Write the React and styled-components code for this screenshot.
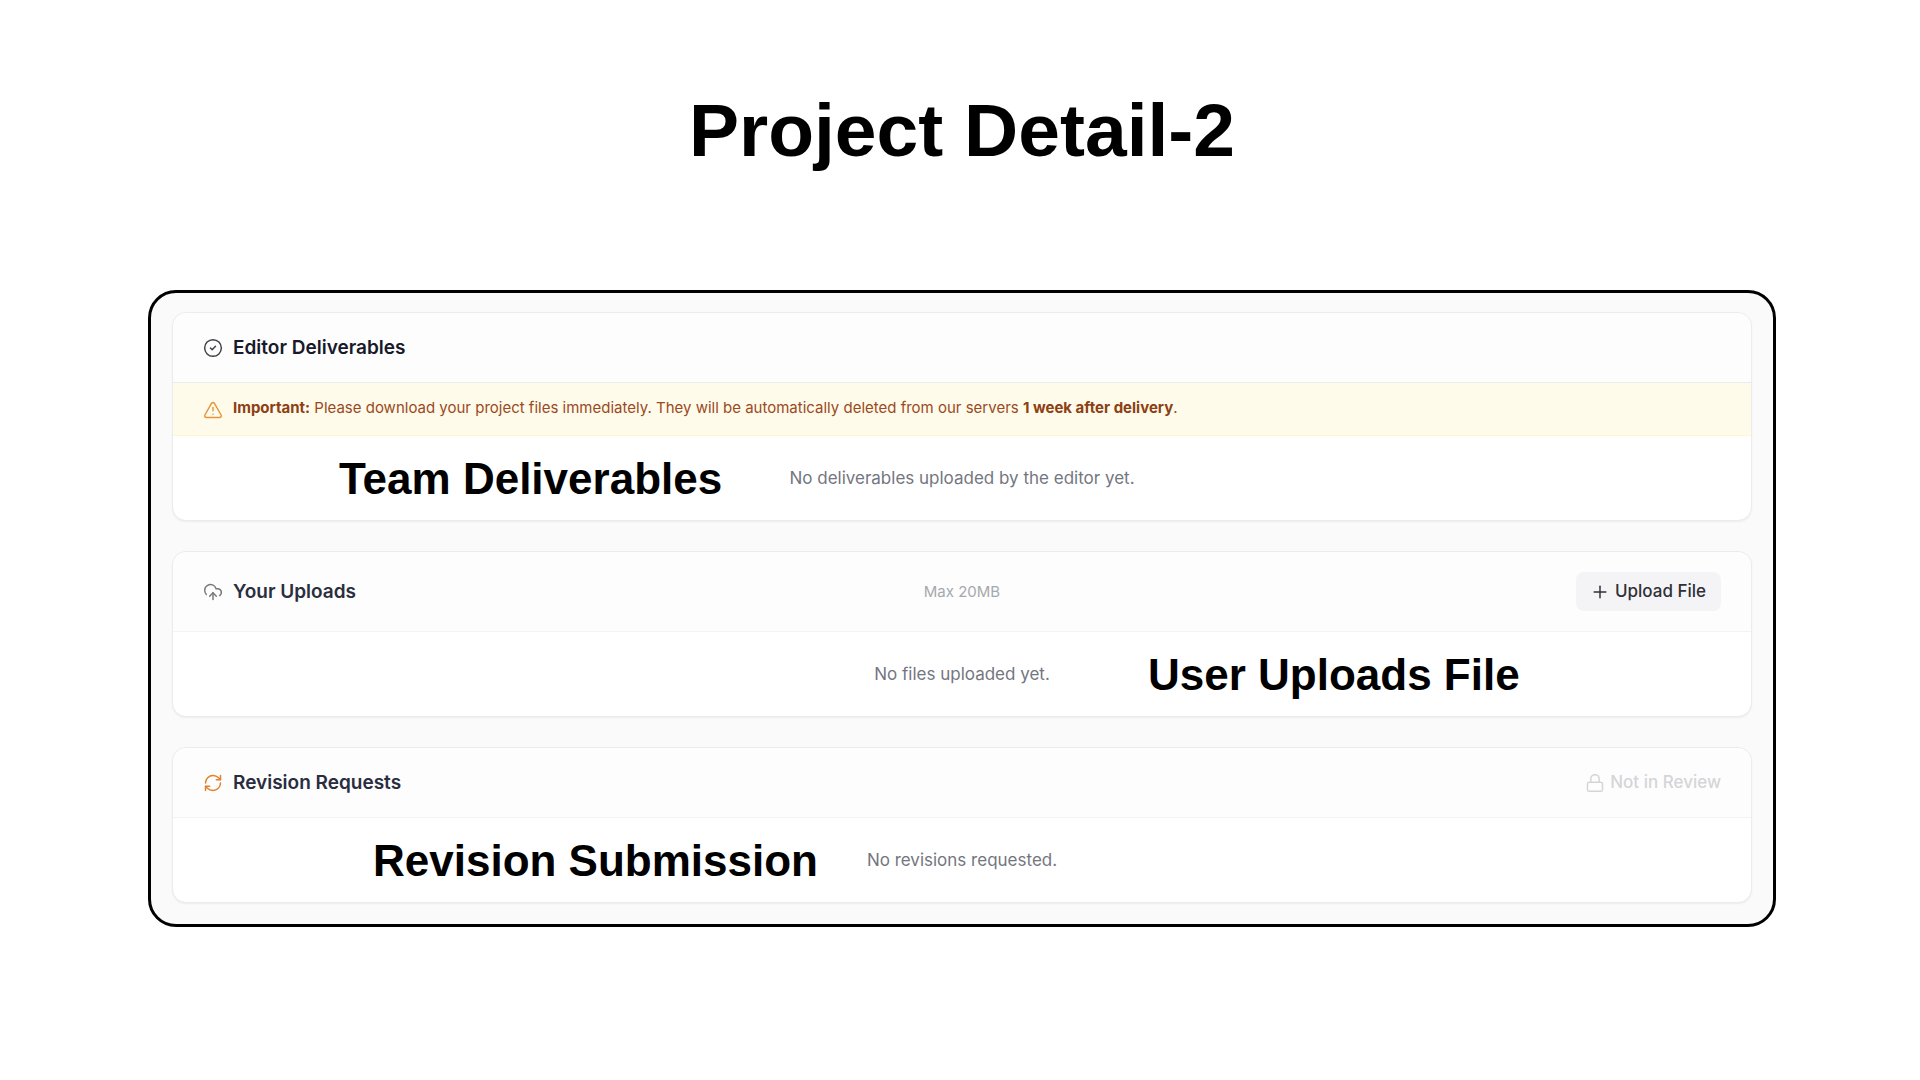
import React from 'react'
import styled, { createGlobalStyle } from 'styled-components'
import { CircleCheck, CloudUpload, Lock, Plus, RefreshCw, TriangleAlert } from 'lucide-react'

const GlobalStyle = createGlobalStyle`
  * {
    box-sizing: border-box;
  }

  body {
    margin: 0;
    background: #fff;
    font-family: Inter, "Liberation Sans", sans-serif;
    -webkit-font-smoothing: antialiased;
  }
`

export default function App() {
  return (
    <Slide>
      <GlobalStyle />
      <SlideTitle>Project Detail-2</SlideTitle>

      <Frame>
        {/* Editor deliverables */}
        <Card>
          <Header $line="#ebebee">
            <Heading $color="#18192b">
              <CircleCheck size={20} strokeWidth={1.75} color="#3f3f46" />
              Editor Deliverables
            </Heading>
          </Header>
          <Notice>
            <NoticeIcon size={20} strokeWidth={1.75} />
            <p>
              <strong>Important:</strong> Please download your project files immediately. They will
              be automatically deleted from our servers <strong>1 week after delivery</strong>.
            </p>
          </Notice>
          <Body>
            <Empty>No deliverables uploaded by the editor yet.</Empty>
            <Callout $left="166px">Team Deliverables</Callout>
          </Body>
        </Card>

        {/* User uploads */}
        <Card>
          <Header>
            <Heading $color="#2a2e3d">
              <CloudUpload size={20} strokeWidth={1.75} color="#77777c" />
              Your Uploads
            </Heading>
            <Limit>Max 20MB</Limit>
            <UploadButton type="button">
              <Plus size={20} strokeWidth={1.75} />
              Upload File
            </UploadButton>
          </Header>
          <Body>
            <Empty>No files uploaded yet.</Empty>
            <Callout $left="975px">User Uploads File</Callout>
          </Body>
        </Card>

        {/* Revisions */}
        <Card>
          <Header>
            <Heading $color="#2a2c40">
              <RefreshCw size={20} strokeWidth={1.75} color="#e0822a" />
              Revision Requests
            </Heading>
            <span />
            <ReviewButton type="button" disabled>
              <Lock size={20} strokeWidth={1.75} />
              Not in Review
            </ReviewButton>
          </Header>
          <Body>
            <Empty>No revisions requested.</Empty>
            <Callout $left="200px">Revision Submission</Callout>
          </Body>
        </Card>
      </Frame>
    </Slide>
  )
}

const Slide = styled.main`
  padding: 86px 144px 86px 148px;
`

const SlideTitle = styled.h1`
  margin: 0 0 116px;
  font-family: "Liberation Sans", Arial, sans-serif;
  font-size: 75px;
  line-height: 88px;
  font-weight: 700;
  text-align: center;
  color: #000;
`

const Frame = styled.div`
  display: flex;
  flex-direction: column;
  gap: 30px;
  padding: 19px 21px;
  border: 3px solid #000;
  border-radius: 28px;
  background: #fafafb;
`

const Card = styled.section`
  border: 1px solid #ececef;
  border-radius: 14px;
  background: #fff;
  box-shadow: 0 1px 2px rgba(0, 0, 0, .06);

  &:last-child {
    margin-bottom: 2px;
  }
`

const Header = styled.header`
  display: grid;
  grid-template-columns: 1fr auto 1fr;
  align-items: center;
  padding: 20px 30px;
  border-bottom: 1px solid ${({ $line }) => $line || '#f3f3f4'};
  border-radius: 14px 14px 0 0;
  background: #fdfdfd;
`

const Heading = styled.h2`
  display: flex;
  align-items: center;
  gap: 10px;
  margin: 0;
  font-size: 19px;
  line-height: 29px;
  font-weight: 600;
  white-space: nowrap;
  color: ${({ $color }) => $color};
`

const Notice = styled.div`
  display: flex;
  align-items: flex-start;
  gap: 10px;
  padding: 13px 30px 15px;
  border-bottom: 1px solid #fdf6d0;
  background: #fffbea;
  font-size: 15px;
  line-height: 24px;
  color: #9a4a1f;

  p {
    margin: 0;
  }

  strong {
    font-weight: 700;
    color: #8c4014;
  }
`

const NoticeIcon = styled(TriangleAlert)`
  flex: none;
  margin-top: 4px;
  color: #e6953f;
`

const Body = styled.div`
  position: relative;
  padding: 30px;
`

const Empty = styled.p`
  margin: 0;
  font-size: 17px;
  line-height: 24px;
  text-align: center;
  color: #74767f;
`

// Big label laid over the card.
const Callout = styled.strong`
  position: absolute;
  top: 17px;
  left: ${({ $left }) => $left};
  font-family: "Liberation Sans", Arial, sans-serif;
  font-size: 44px;
  line-height: 52px;
  font-weight: 700;
  white-space: nowrap;
  color: #000;
`

const Limit = styled.span`
  font-size: 15px;
  line-height: 24px;
  color: #a6a8ae;
`

const UploadButton = styled.button`
  display: flex;
  align-items: center;
  justify-self: end;
  gap: 5px;
  padding: 8px 15px 8px 14px;
  border: 0;
  border-radius: 8px;
  background: #f4f4f6;
  font-family: inherit;
  font-size: 17px;
  line-height: 23px;
  font-weight: 500;
  color: #2f3037;
`

const ReviewButton = styled.button`
  display: flex;
  align-items: center;
  justify-self: end;
  gap: 5px;
  padding: 0;
  border: 0;
  background: none;
  font-family: inherit;
  font-size: 17px;
  line-height: 23px;
  font-weight: 500;
  color: #d5d5d8;
`
